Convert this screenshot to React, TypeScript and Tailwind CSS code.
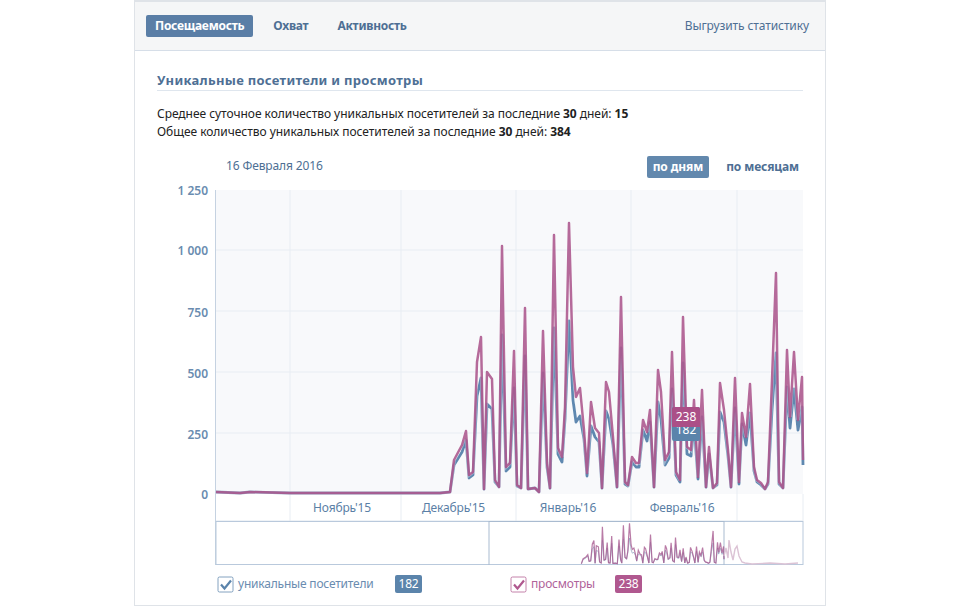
const pink: [number, number][] = [
  [216, 492], [240, 493], [250, 492], [290, 493], [330, 493], [400, 493], [425, 493], [440, 493], [450, 492], [454, 460], [462, 445], [466, 431], [469, 475], [473, 472], [477, 362], [481, 337], [484, 489], [487, 372], [492, 379], [495, 480], [499, 487], [502, 246], [506, 467], [510, 463], [514, 351], [517, 485], [521, 488], [525, 308], [528, 489], [535, 488], [539, 492], [543, 331], [547, 463], [550, 488], [554, 235], [558, 448], [562, 457], [565, 407], [569, 223], [573, 367], [576, 397], [580, 388], [584, 430], [587, 473], [591, 402], [595, 428], [599, 433], [602, 488], [606, 382], [609, 392], [613, 437], [617, 487], [621, 297], [625, 482], [628, 485], [632, 457], [636, 463], [639, 463], [643, 420], [647, 432], [650, 410], [654, 487], [658, 370], [661, 392], [665, 460], [669, 452], [672, 352], [676, 472], [680, 480], [683, 317], [687, 447], [691, 450], [694, 400], [698, 477], [702, 390], [706, 487], [709, 447], [713, 488], [717, 483], [720, 383], [724, 410], [728, 450], [731, 487], [735, 378], [739, 482], [742, 413], [746, 437], [750, 384], [754, 467], [757, 480], [761, 483], [765, 489], [768, 482], [772, 380], [776, 273], [779, 482], [783, 488], [787, 350], [790, 417], [794, 352], [798, 420], [802, 377], [803, 460],
];

const blue = pink.map(([x, y]): [number, number] => {
  const h = 494 - y;
  if (h < 8) return [x, y];
  const r = h > 200 ? 0.64 : h > 90 ? 0.74 : 0.86;
  return [x, Math.round(494 - h * r)];
});

// the small chart is the big one squeezed into the selected window
const squeeze = (p: [number, number][]) =>
  p
    .filter(([x]) => x >= 450)
    .map(([x, y]): [number, number] => [
      Math.round((583 + (x - 454) * 0.404) * 10) / 10,
      Math.round((564 - (494 - y) * 0.15) * 10) / 10,
    ]);

const miniOut: [number, number][] = [
  [724, 556], [726, 548], [728, 558], [729, 540], [731, 552], [733, 560], [735, 549], [737, 546], [739, 556], [742, 562], [745, 563], [752, 564], [770, 563], [785, 564], [798, 563],
];

const toPts = (p: [number, number][]) => p.map(([x, y]) => `${x},${y}`).join(" ");

function Check({ color }: { color: string }) {
  return (
    <svg width="17" height="17" viewBox="0 0 17 17" fill="none">
      <rect x="1" y="1" width="15" height="15" rx="1.5" stroke={color} strokeOpacity="0.75" />
      <path d="M4 8.5l3.5 4L14 4.5" stroke={color} strokeWidth="2.2" />
    </svg>
  );
}

export default function App() {
  return (
    <div className="h-[607px] overflow-hidden bg-white font-['Noto_Sans',sans-serif]">
      <div className="relative ml-[134px] h-[606px] w-[692px] border-x border-b border-t-2 border-[#dfe3e8] bg-white">
        <div className="flex h-[49px] items-center justify-between border-b border-[#d6dee8] bg-[#f5f6f7] pl-[11px] pr-[16px]">
          <div className="flex items-center text-[12px] font-bold tracking-[-0.25px] text-[#4e6f94]">
            <div className="mr-[20px] rounded-[2px] bg-[#5a7ea6] px-[9px] py-[2px] text-white">Посещаемость</div>
            <div className="mr-[29px]">Охват</div>
            <div>Активность</div>
          </div>
          <div className="text-[12px] tracking-[-0.1px] text-[#4e6f94]">Выгрузить статистику</div>
        </div>

        <div className="px-[22px]">
          <div className="mt-[22px] border-b border-[#dfe6ee] pb-[2px] text-[13px] font-bold leading-[15px] tracking-[0.3px] text-[#4e6f94]">
            Уникальные посетители и просмотры
          </div>
          <div className="mt-[14px] text-[12px] leading-[18px] tracking-[-0.04px] text-[#222]">
            <div>
              Среднее суточное количество уникальных посетителей за последние <b>30</b> дней: <b>15</b>
            </div>
            <div>
              Общее количество уникальных посетителей за последние <b>30</b> дней: <b>384</b>
            </div>
          </div>
          <div className="mt-[15px] flex items-center justify-between pl-[69px] pr-[4px] text-[12px]">
            <div className="-mt-[3px] tracking-[-0.12px] text-[#4e6f94]">16 Февраля 2016</div>
            <div className="flex items-center gap-[17px] font-bold tracking-[-0.1px] text-[#4e6f94]">
              <div className="rounded-[2px] bg-[#6288ad] px-[6px] py-[2px] text-white">по дням</div>
              <div>по месяцам</div>
            </div>
          </div>
        </div>

        <div className="relative mt-[8px]">
          <svg width="690" height="389" viewBox="135 186 690 389" className="block" fontFamily="Noto Sans, sans-serif" fontSize="12">
            <rect x="216" y="190" width="587" height="304" fill="#f8f9fb" />
            {[250, 311, 372, 433].map((y) => (
              <line key={y} x1="216" x2="803" y1={y} y2={y} stroke="#e8edf3" />
            ))}
            {[290, 401, 516, 631, 737].map((x) => (
              <line key={x} x1={x} x2={x} y1="190" y2="521" stroke="#e8edf3" />
            ))}
            <line x1="215.5" x2="215.5" y1="190" y2="565" stroke="#c5d2e1" />
            <line x1="216" x2="803" y1="521" y2="521" stroke="#dfe6ee" />
            <line x1="803" x2="803" y1="494" y2="521" stroke="#e8edf3" />
            {[
              ["1 250", 195],
              ["1 000", 255],
              ["750", 317],
              ["500", 378],
              ["250", 439],
              ["0", 499],
            ].map(([t, y]) => (
              <text key={t} x="208" y={y} textAnchor="end" fill="#6a8cb0" fontWeight="600">
                {t}
              </text>
            ))}
            {[
              ["Ноябрь'15", 342],
              ["Декабрь'15", 453.5],
              ["Январь'16", 568],
              ["Февраль'16", 682],
            ].map(([t, x]) => (
              <text key={t} x={x} y="512" textAnchor="middle" fill="#5b7fa6" letterSpacing="-0.15">
                {t}
              </text>
            ))}

            <polyline points={toPts(blue)} fill="none" stroke="#5f88b0" strokeWidth="2.8" strokeLinejoin="round" />
            <polyline points={toPts(pink)} fill="none" stroke="#ffffff" strokeOpacity="0.35" strokeWidth="3.8" />
            <polyline points={toPts(pink)} fill="none" stroke="#a85088" strokeOpacity="0.85" strokeWidth="2.5" strokeLinejoin="round" />

            <rect x="216" y="521.5" width="587" height="43" fill="#fff" stroke="#b9c9dc" />
            <line x1="489" x2="489" y1="521" y2="565" stroke="#a9bbd0" />
            <line x1="724" x2="724" y1="521" y2="565" stroke="#a9bbd0" />
            <line x1="489" x2="724" y1="521.5" y2="521.5" stroke="#a9bbd0" />
            <polyline points={toPts(squeeze(blue).filter(([x]) => x <= 724))} fill="none" stroke="#8fa2c0" strokeOpacity="0.7" strokeWidth="1" />
            <polyline points={toPts(squeeze(pink).filter(([x]) => x <= 724))} fill="none" stroke="#a85a90" strokeOpacity="0.8" strokeWidth="1.2" />
            <polyline points={toPts(miniOut)} fill="none" stroke="#dcc3d5" strokeWidth="1.4" />
          </svg>
          <div className="absolute left-[537px] top-[221px] w-[28px] rounded-[2px] bg-[#5b84ab] pb-[2px] pt-[14px] text-center text-[12px] leading-[18px] text-white">
            182
            <div className="absolute inset-x-0 top-0 rounded-t-[2px] bg-[#ab4f87] leading-[20px]">238</div>
          </div>
        </div>

        <div className="flex items-center pl-[82px] text-[12px] tracking-[-0.2px]">
          <div className="flex w-[293px] items-center gap-[4px] text-[#6a8cb0]">
            <Check color="#5b84ab" />
            <span className="w-[153px]">уникальные посетители</span>
            <span className="w-[27px] rounded-[2px] bg-[#5b84ab] text-center text-[12px] leading-[18px] text-white">182</span>
          </div>
          <div className="flex items-center gap-[4px] text-[#b0639a]">
            <Check color="#b0588f" />
            <span className="w-[80px]">просмотры</span>
            <span className="w-[27px] rounded-[2px] bg-[#b0588f] text-center text-[12px] leading-[18px] text-white">238</span>
          </div>
        </div>
      </div>
    </div>
  );
}
